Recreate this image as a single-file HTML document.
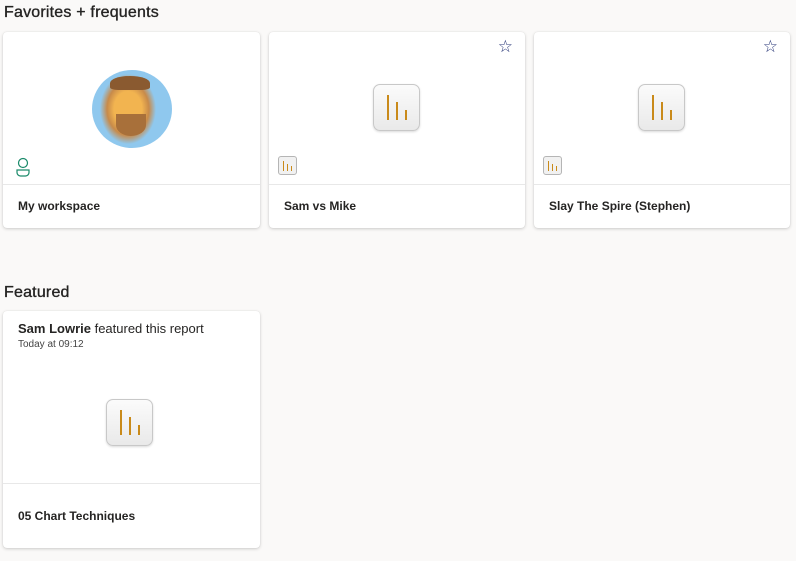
<!DOCTYPE html>
<html><head><style>
body{margin:0;width:796px;height:561px;background:#faf9f8;font-family:"Liberation Sans",sans-serif;color:#252423;position:relative;overflow:hidden}
h2{position:absolute;left:4px;margin:0;font-size:16px;font-weight:normal;letter-spacing:0.2px;-webkit-text-stroke:0.35px #252423}
.card{position:absolute;background:#fff;border-radius:4px;box-shadow:0 1px 3px rgba(0,0,0,.18),0 0 1px rgba(0,0,0,.1)}
.div{position:absolute;left:0;right:0;height:1px;background:#e8e8e8}
.title{position:absolute;left:15px;font-size:12px;font-weight:bold;color:#252423}
.ri{position:absolute;width:45px;height:45px;border:1px solid #c8c8c8;border-radius:7px;background:linear-gradient(#fbfbfb,#e9e9e9);box-shadow:0 1px 2px rgba(0,0,0,.15)}
.ri i{position:absolute;bottom:10px;width:2px;background:#c98a1a}
.si{position:absolute;left:9px;top:124px;width:17px;height:17px;border:1px solid #b5b5b5;border-radius:3px;background:#f1f1f1}
.si i{position:absolute;bottom:3px;width:1px;background:#c98a1a}
.star{position:absolute;top:6px;right:12px;font-size:17px;line-height:17px;color:#2c3a7a}
</style></head><body>
<h2 style="top:4px">Favorites + frequents</h2>
<div class="card" style="left:3px;top:32px;width:257px;height:196px">
 <div style="position:absolute;left:89px;top:38px;width:80px;height:78px;border-radius:50%;background:radial-gradient(ellipse 35% 45% at 45% 50%,#f2b450 0 50%,#c78a4a 75%,#8fc8ee 100%),radial-gradient(circle,#8fc8ee,#cfe8fa);overflow:hidden"><div style="position:absolute;left:18px;top:6px;width:40px;height:14px;border-radius:50% 50% 20% 20%;background:#8a5a30"></div><div style="position:absolute;left:24px;top:44px;width:30px;height:22px;border-radius:0 0 50% 50%;background:#a8703a"></div></div>
 <svg style="position:absolute;left:12px;top:125px" width="18" height="20" viewBox="0 0 18 20"><circle cx="8" cy="6" r="4.5" fill="none" stroke="#1a8a6a" stroke-width="1.2"/><path d="M2 13h12v2.5a3.5 3.5 0 0 1-3.5 3.5h-5A3.5 3.5 0 0 1 2 15.5z" fill="none" stroke="#1a8a6a" stroke-width="1.2"/></svg>
 <div class="div" style="top:152px"></div>
 <div class="title" style="top:167px">My workspace</div>
</div>
<div class="card" style="left:269px;top:32px;width:256px;height:196px">
 <div class="star">☆</div>
 <div class="ri" style="left:104px;top:52px"><i style="left:13px;height:25px"></i><i style="left:22px;height:18px"></i><i style="left:31px;height:10px"></i></div>
 <div class="si"><i style="left:4px;height:10px"></i><i style="left:8px;height:7px"></i><i style="left:12px;height:5px"></i></div>
 <div class="div" style="top:152px"></div>
 <div class="title" style="top:167px">Sam vs Mike</div>
</div>
<div class="card" style="left:534px;top:32px;width:256px;height:196px">
 <div class="star">☆</div>
 <div class="ri" style="left:104px;top:52px"><i style="left:13px;height:25px"></i><i style="left:22px;height:18px"></i><i style="left:31px;height:10px"></i></div>
 <div class="si"><i style="left:4px;height:10px"></i><i style="left:8px;height:7px"></i><i style="left:12px;height:5px"></i></div>
 <div class="div" style="top:152px"></div>
 <div class="title" style="top:167px">Slay The Spire (Stephen)</div>
</div>
<h2 style="top:284px">Featured</h2>
<div class="card" style="left:3px;top:311px;width:257px;height:237px">
 <div style="position:absolute;left:15px;top:10px;font-size:13px"><b>Sam Lowrie</b> featured this report</div>
 <div style="position:absolute;left:15px;top:28px;font-size:10px;color:#444">Today at 09:12</div>
 <div class="ri" style="left:103px;top:88px"><i style="left:13px;height:25px"></i><i style="left:22px;height:18px"></i><i style="left:31px;height:10px"></i></div>
 <div class="div" style="top:172px"></div>
 <div class="title" style="top:198px">05 Chart Techniques</div>
</div>
</body></html>
